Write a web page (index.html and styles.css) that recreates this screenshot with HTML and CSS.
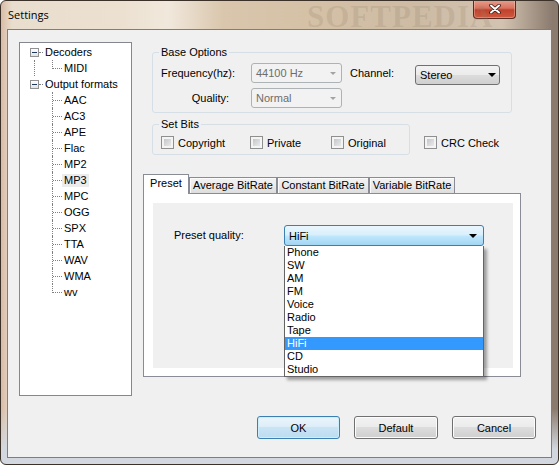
FILE: index.html
```html
<!DOCTYPE html>
<html lang="en">
<head>
    <meta charset="UTF-8">
    <title>Settings</title>
    <link rel="stylesheet" href="styles.css">
</head>
<body>
<div class="window">
    <div class="titlebar">
        <span class="title">Settings</span>
        <span class="watermark">SOFTPEDIA</span>
        <div class="close">
            <svg width="12" height="10" viewBox="0 0 12 10">
                <path d="M2 1.5L10 8.5M10 1.5L2 8.5" stroke="#3a1a14" stroke-width="3.6" stroke-linecap="round"/>
                <path d="M2 1.5L10 8.5M10 1.5L2 8.5" stroke="#fff" stroke-width="2" stroke-linecap="round"/>
            </svg>
        </div>
    </div>

    <div class="client">
        <div class="main">
            <ul class="tree">
                <li class="root">
                    <div class="row"><span class="exp"></span><span class="hline"></span><span class="name">Decoders</span></div>
                    <ul class="kids">
                        <li class="leaf"><span class="elbow"></span><span class="name">MIDI</span></li>
                    </ul>
                </li>
                <li class="root">
                    <div class="row"><span class="exp"></span><span class="hline"></span><span class="name">Output formats</span></div>
                    <ul class="kids">
                        <li class="leaf"><span class="elbow"></span><span class="name">AAC</span></li>
                        <li class="leaf"><span class="elbow"></span><span class="name">AC3</span></li>
                        <li class="leaf"><span class="elbow"></span><span class="name">APE</span></li>
                        <li class="leaf"><span class="elbow"></span><span class="name">Flac</span></li>
                        <li class="leaf"><span class="elbow"></span><span class="name">MP2</span></li>
                        <li class="leaf selected"><span class="elbow"></span><span class="name">MP3</span></li>
                        <li class="leaf"><span class="elbow"></span><span class="name">MPC</span></li>
                        <li class="leaf"><span class="elbow"></span><span class="name">OGG</span></li>
                        <li class="leaf"><span class="elbow"></span><span class="name">SPX</span></li>
                        <li class="leaf"><span class="elbow"></span><span class="name">TTA</span></li>
                        <li class="leaf"><span class="elbow"></span><span class="name">WAV</span></li>
                        <li class="leaf"><span class="elbow"></span><span class="name">WMA</span></li>
                        <li class="leaf"><span class="elbow"></span><span class="name">wv</span></li>
                    </ul>
                </li>
            </ul>

            <div class="options">
                <fieldset class="group base">
                    <legend>Base Options</legend>
                    <div class="base-row">
                        <span class="lbl">Frequency(hz):</span>
                        <div class="combo disabled"><span>44100 Hz</span><span class="arrow"></span></div>
                        <span class="lbl-channel">Channel:</span>
                        <div class="combo normal stereo"><span>Stereo</span><span class="arrow"></span></div>
                    </div>
                    <div class="base-row second">
                        <span class="lbl">Quality:</span>
                        <div class="combo disabled"><span>Normal</span><span class="arrow"></span></div>
                    </div>
                </fieldset>

                <div class="bits-row">
                    <fieldset class="group bits">
                        <legend>Set Bits</legend>
                        <div class="bits-items">
                            <label class="check copyright"><span class="box"></span>Copyright</label>
                            <label class="check private"><span class="box"></span>Private</label>
                            <label class="check"><span class="box"></span>Original</label>
                        </div>
                    </fieldset>
                    <label class="check crc"><span class="box"></span>CRC Check</label>
                </div>

                <div class="tabs">
                    <div class="tab active tab-preset">Preset</div>
                    <div class="tab tab-avg">Average BitRate</div>
                    <div class="tab tab-const">Constant BitRate</div>
                    <div class="tab tab-var">Variable BitRate</div>
                </div>
                <div class="tab-panel">
                    <div class="page">
                        <div class="preset-row">
                            <span class="lbl-preset">Preset quality:</span>
                            <div class="combo-wrap">
                                <div class="combo hot"><span>HiFi</span><span class="arrow"></span></div>
                                <ul class="dropdown">
                                    <li>Phone</li>
                                    <li>SW</li>
                                    <li>AM</li>
                                    <li>FM</li>
                                    <li>Voice</li>
                                    <li>Radio</li>
                                    <li>Tape</li>
                                    <li class="current">HiFi</li>
                                    <li>CD</li>
                                    <li>Studio</li>
                                </ul>
                            </div>
                        </div>
                    </div>
                </div>
            </div>
        </div>

        <div class="buttons">
            <button class="btn ok">OK</button>
            <button class="btn">Default</button>
            <button class="btn">Cancel</button>
        </div>
    </div>
</div>
</body>
</html>
```

FILE: styles.css
```css
html, body {
    margin: 0;
    padding: 0;
    font-family: "Liberation Sans", Arial, sans-serif;
    font-size: 11px;
    color: #000;
    background: #fff;
}

.window {
    box-sizing: border-box;
    width: 559px;
    height: 465px;
    padding: 0 6px 6px 6px;
    border: 1px solid #3b3128;
    border-radius: 6px;
    background:
        linear-gradient(to bottom, rgba(210, 216, 226, 0) 88%, #d3d8e0 97%),
        linear-gradient(to right, #d8bca5 0%, #e9dece 2%, #ece1d1 22%, #f1e8dc 30%, #d9c6ac 40%, #d4c1a6 55%, #cdbba4 75%, #d2c3b1 90%, #8b7b6e 99%);
    overflow: hidden;
}

/* Заголовок окна */
.titlebar {
    position: relative;
    display: flex;
    height: 28px;
}

.title {
    font-family: "Open Sans", "Liberation Sans", sans-serif;
    font-size: 11px;
    margin: 7px 0 0 1px;
    line-height: 14px;
}

.watermark {
    position: absolute;
    left: 300px;
    top: -2px;
    font-family: "Liberation Serif", serif;
    font-weight: bold;
    font-size: 31px;
    letter-spacing: 1px;
    color: rgba(150, 128, 104, 0.22);
}

.close {
    display: flex;
    align-items: center;
    justify-content: center;
    box-sizing: border-box;
    width: 43px;
    height: 19px;
    margin: -1px 36px 0 auto;
    border: 1px solid #5b2a22;
    border-top: none;
    border-radius: 0 0 4px 4px;
    background: linear-gradient(#e8a08f 0%, #d8735f 45%, #c1412c 55%, #cf5a3f 100%);
    box-shadow: inset 0 0 0 1px rgba(255, 220, 210, 0.35);
}

/* Клиентская область */
.client {
    box-sizing: border-box;
    height: 429px;
    border: 1px solid #7b7f85;
    background: #f0f0f0;
}

.main {
    display: flex;
    padding-top: 12px;
}

/* Дерево */
.tree, .kids, .dropdown {
    list-style: none;
    margin: 0;
    padding: 0;
}

.tree {
    box-sizing: border-box;
    width: 113px;
    height: 354px;
    margin-left: 11px;
    padding-top: 1px;
    border: 1px solid #828790;
    background: #fff;
}

.row {
    display: flex;
    height: 16px;
}

.exp {
    box-sizing: border-box;
    display: flex;
    align-items: center;
    justify-content: center;
    width: 9px;
    height: 9px;
    margin: 4px 0 0 10px;
    border: 1px solid #919191;
    background: linear-gradient(#ffffff, #e3e3e3);
}

.exp::after {
    content: "";
    width: 5px;
    height: 1px;
    background: #1e395b;
}

.hline {
    width: 4px;
    height: 0;
    margin-top: 8px;
    border-top: 1px dotted #808080;
}

.name {
    height: 13px;
    margin-top: 2px;
    padding: 0 2px;
    line-height: 13px;
    white-space: nowrap;
}

.kids {
    margin-left: 15px;
}

.root:not(:last-child) > .kids {
    margin-left: 14px;
    border-left: 1px dotted #808080;
}

.leaf {
    display: flex;
    height: 16px;
    margin-left: 17px;
}

.leaf:not(:last-child) {
    border-left: 1px dotted #808080;
}

.elbow {
    width: 9px;
    height: 8px;
    border-bottom: 1px dotted #808080;
}

.leaf:last-child .elbow {
    border-left: 1px dotted #808080;
}

.leaf.selected .name {
    background: #ececec;
}

/* Правая часть */
.options {
    width: 378px;
    margin: 3px 0 0 11px;
}

fieldset.group {
    box-sizing: border-box;
    min-width: 0;
    margin: 0 0 0 9px;
    padding: 4px 8px 4px 6px;
    border: 1px solid #d5dfe5;
    border-radius: 3px;
}

.group legend {
    padding: 0 2px;
    line-height: 14px;
}

.base {
    width: 360px;
}

.base-row {
    display: flex;
    align-items: center;
    height: 20px;
    margin-left: 2px;
}

.base-row.second {
    margin-top: 5px;
}

.lbl {
    width: 68px;
    margin-right: 22px;
    text-align: right;
    white-space: nowrap;
}

.lbl-channel {
    width: 65px;
    margin-left: 8px;
}

.combo {
    box-sizing: border-box;
    display: flex;
    align-items: center;
    justify-content: space-between;
    height: 20px;
    padding: 0 5px 0 4px;
    border: 1px solid #707070;
    border-radius: 3px;
}

.combo.disabled {
    width: 91px;
    border-color: #adb2b5;
    background: #f2f2f2;
    color: #6d6d6d;
}

.combo.normal {
    background: linear-gradient(#f2f2f2 0%, #ebebeb 50%, #dddddd 50%, #cfcfcf 100%);
}

.stereo {
    width: 85px;
    align-self: flex-start;
    margin-top: 2px;
    padding-right: 3px;
}

.arrow {
    width: 0;
    height: 0;
    border-left: 4px solid transparent;
    border-right: 4px solid transparent;
    border-top: 4px solid #000;
}

.disabled .arrow {
    border-left-width: 3px;
    border-right-width: 3px;
    border-top: 3px solid #a3a3a3;
}

.combo.hot {
    height: 21px;
    border-color: #3c7fb1;
    background: linear-gradient(#eaf6fd 0%, #d9f0fc 45%, #bee6fd 55%, #a2d5f2 100%);
    padding-right: 6px;
}

.bits-row {
    display: flex;
    align-items: flex-start;
    margin-top: 4px;
}

.bits {
    width: 258px;
    padding: 5px 6px 8px 6px;
}

.bits-items {
    display: flex;
    margin-left: 2px;
}

.check {
    display: flex;
    align-items: center;
    gap: 4px;
    height: 15px;
    white-space: nowrap;
}

.check.copyright {
    width: 89px;
}

.check.private {
    width: 81px;
}

.check.crc {
    margin: 18px 0 0 14px;
}

.box {
    box-sizing: border-box;
    width: 13px;
    height: 13px;
    border: 1px solid #8e8f8f;
    background: linear-gradient(135deg, #b9bcc0 0%, #e2e3e4 70%, #f2f2f2 100%);
    box-shadow: inset 0 0 0 2px #f4f4f4;
}

/* Вкладки */
.tabs {
    display: flex;
    align-items: flex-end;
    height: 19px;
    margin-top: 19px;
}

.tab {
    box-sizing: border-box;
    height: 16px;
    line-height: 15px;
    text-align: center;
    white-space: nowrap;
    border: 1px solid #898c95;
    border-bottom: none;
    background: linear-gradient(#f3f3f3 0%, #ebebeb 50%, #dddddd 100%);
    box-shadow: inset 1px 1px 0 #fbfbfb;
}

.tab.active {
    position: relative;
    z-index: 1;
    height: 20px;
    margin-bottom: -1px;
    padding-top: 1px;
    background: #fff;
    box-shadow: none;
}

.tab-preset { width: 46px; }
.tab-avg { width: 88px; }
.tab-const { width: 92px; }
.tab-var { width: 86px; }

.tab-panel {
    box-sizing: border-box;
    height: 184px;
    padding: 9px 7px 8px 9px;
    border: 1px solid #898c95;
    background: #fff;
}

.page {
    box-sizing: border-box;
    height: 165px;
    padding: 22px 0 0 21px;
    background: #f0f0f0;
}

.preset-row {
    display: flex;
    align-items: flex-start;
}

.lbl-preset {
    width: 110px;
    line-height: 20px;
}

.combo-wrap {
    position: relative;
    width: 200px;
}

.dropdown {
    position: absolute;
    left: 0;
    top: 100%;
    z-index: 5;
    box-sizing: border-box;
    width: 200px;
    border: 1px solid #646464;
    border-top: none;
    background: #fff;
    box-shadow: 3px 3px 3px rgba(0, 0, 0, 0.35);
}

.dropdown li {
    height: 13px;
    line-height: 13px;
    padding-left: 2px;
}

.dropdown li.current {
    background: #3399ff;
    color: #fff;
}

/* Кнопки */
.buttons {
    display: flex;
    justify-content: flex-end;
    gap: 14px;
    margin-top: 20px;
    padding-right: 15px;
}

.btn {
    box-sizing: border-box;
    width: 84px;
    height: 23px;
    padding: 0;
    font-family: "Liberation Sans", Arial, sans-serif;
    font-size: 11px;
    color: #000;
    border: 1px solid #707070;
    border-radius: 3px;
    background: linear-gradient(#f2f2f2 0%, #ebebeb 50%, #dddddd 50%, #cfcfcf 100%);
    box-shadow: inset 0 0 0 1px #fcfcfc;
}

.btn.ok {
    width: 83px;
    border-color: #3c7fb1;
    background: linear-gradient(#eaf5fc 0%, #dcedf8 50%, #c9e4f5 50%, #bcdcf0 100%);
    box-shadow: inset 0 0 0 1px #cdeefd;
}
```
